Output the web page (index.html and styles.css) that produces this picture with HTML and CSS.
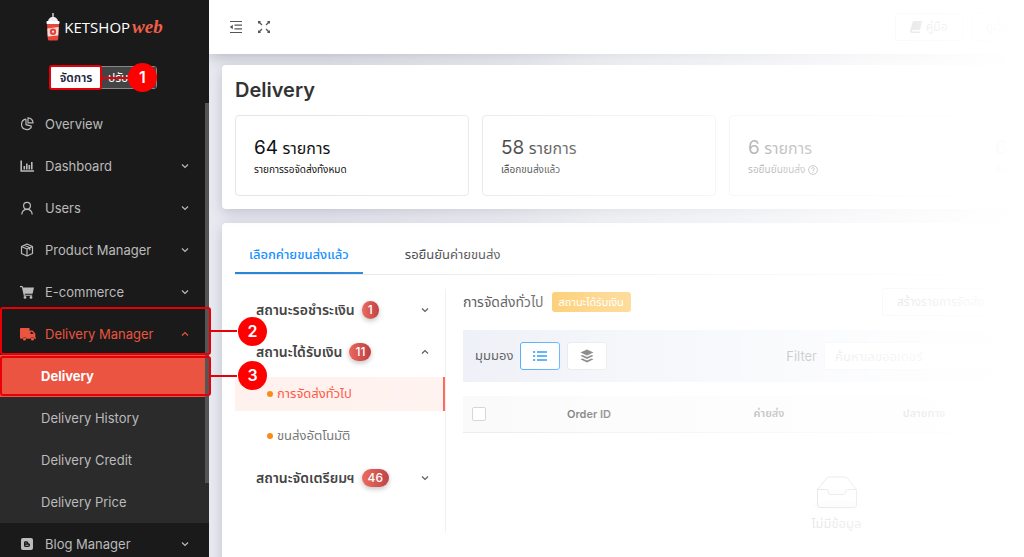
FILE: index.html
```html
<!DOCTYPE html>
<html lang="th">
<head>
    <meta charset="UTF-8">
    <meta name="viewport" content="width=device-width, initial-scale=1.0">
    <title>Delivery - KETSHOPweb</title>
    <link rel="stylesheet" href="styles.css">
</head>
<body>

    <!-- Shared chevrons -->
    <svg width="0" height="0" class="defs">
        <symbol id="down" viewBox="0 0 8 8"><path d="M1 2.5l3 3 3-3" fill="none" stroke="currentColor" stroke-width="1.2"/></symbol>
        <symbol id="up" viewBox="0 0 8 8"><path d="M1 5.5l3-3 3 3" fill="none" stroke="currentColor" stroke-width="1.2"/></symbol>
    </svg>

    <div class="app">
        <aside class="sidebar">
            <a href="#" class="logo">
                <svg width="14" height="28" viewBox="0 0 14 28">
                    <path d="M6.4 0h1.200v4h-1.200z" fill="#fff"/>
                    <path d="M2 9c0-3 2-5 5-5s5 2 5 5z" fill="#eee"/>
                    <rect x="0.500" y="8" width="13" height="3" rx="1" fill="#fff"/>
                    <path d="M1 11h12l-.8 15q-.1 1.500-1.600 1.500H3.400q-1.500 0-1.600-1.500z" fill="#e8453c"/>
                    <path d="M1.300 15.500l11.400-1.500-.5 8.500-10.500 1z" fill="#f7d9d5"/>
                    <circle cx="7" cy="18.800" r="3.200" fill="#e8453c"/>
                    <circle cx="7" cy="18.800" r="1" fill="#fff"/>
                </svg>
                <span class="logo-name">KETSHOP</span><span class="logo-web">web</span>
            </a>

            <div class="mode">
                <button type="button" class="mode-btn active">จัดการ</button>
                <button type="button" class="mode-btn">ปรับแต่ง</button>
                <span class="mark mark-mode"></span>
                <span class="num num-mode">1</span>
            </div>

            <nav class="menu">
                <ul>
                    <li><a href="#">
                        <svg class="icon" viewBox="0 0 14 14" fill="none" stroke="currentColor" stroke-width="1.200"><path d="M6 2.200a5.200 5.200 0 1 0 5.600 7M6 2.200v5.500l5.600 1.500"/><path d="M8 .8v5h5A5 5 0 0 0 8 .8z"/></svg>
                        Overview</a></li>
                    <li><a href="#">
                        <svg class="icon" viewBox="0 0 14 14" fill="none" stroke="currentColor" stroke-width="1.600"><path d="M1.200 1.500v10.500H14M4.300 10.500V7M6.800 10.500V4.500M9.300 10.500V6M11.800 10.500V3"/></svg>
                        Dashboard <svg class="arrow"><use href="#down"/></svg></a></li>
                    <li><a href="#">
                        <svg class="icon" viewBox="0 0 14 14" fill="none" stroke="currentColor" stroke-width="1.200"><circle cx="7" cy="4.800" r="3.400"/><path d="M1.800 13.500c.2-3 2.200-5.200 5.200-5.200s5 2.200 5.200 5.200"/></svg>
                        Users <svg class="arrow"><use href="#down"/></svg></a></li>
                    <li><a href="#">
                        <svg class="icon" viewBox="0 0 14 14" fill="none" stroke="currentColor" stroke-width="1.200" stroke-linejoin="round"><path d="M7 1l5.500 2.500v7L7 13l-5.500-2.500v-7zM1.500 3.500L7 6l5.500-2.500M7 6v7M4.200 2.300l5.600 2.500v2.500"/></svg>
                        Product Manager <svg class="arrow"><use href="#down"/></svg></a></li>
                    <li><a href="#">
                        <svg class="icon" viewBox="0 0 14 14" fill="currentColor"><path d="M0 1h2.600l.4 1.500h11l-1.400 6.200H4.700l.2 1h7.300v1.100H3.800L1.900 2.200H0z"/><circle cx="5" cy="12.400" r="1.400"/><circle cx="11" cy="12.400" r="1.400"/></svg>
                        E-commerce <svg class="arrow"><use href="#down"/></svg></a></li>
                    <li class="open"><a href="#">
                        <svg class="icon truck" viewBox="0 0 16 14" fill="currentColor"><path d="M1 1h8.500v2.500h3L15.300 6.500v4H16v1.300h-1.500a2.100 2.100 0 0 0-4.100 0H6.600a2.100 2.100 0 0 0-4.100 0H1A1 1 0 0 1 0 10.800V2a1 1 0 0 1 1-1zM10.500 4.800v2.200h3.300l-1.900-2.200z"/><circle cx="4.500" cy="12" r="1.600"/><circle cx="12.500" cy="12" r="1.600"/></svg>
                        Delivery Manager <svg class="arrow"><use href="#up"/></svg></a>
                        <span class="mark mark-parent"></span>
                        <span class="num num-parent">2</span>
                    </li>
                </ul>
                <ul class="submenu">
                    <li class="active"><a href="#">Delivery</a>
                        <span class="mark mark-child"></span>
                        <span class="num num-child">3</span>
                    </li>
                    <li><a href="#">Delivery History</a></li>
                    <li><a href="#">Delivery Credit</a></li>
                    <li><a href="#">Delivery Price</a></li>
                </ul>
                <ul>
                    <li><a href="#">
                        <svg class="icon" viewBox="0 0 14 14"><rect x="1" y="1" width="12" height="12" rx="2" fill="currentColor"/><path d="M5.200 4.200h1.600a1.500 1.500 0 0 1 1.500 1.500q0 .8.7.8a1 1 0 0 1 1 1v.8a1.700 1.700 0 0 1-1.700 1.700H5.500A1.500 1.500 0 0 1 4 8.500v-3a1.300 1.300 0 0 1 1.200-1.300z" fill="#1a1a1a"/><path d="M5.500 6h1M5.500 8.300h3" stroke="#bbb" stroke-width=".9"/></svg>
                        Blog Manager <svg class="arrow"><use href="#down"/></svg></a></li>
                </ul>
                <span class="scroll-thumb"></span>
            </nav>
        </aside>

        <div class="main">
            <div class="page">
                <header class="topbar">
                    <button type="button" class="icon-btn" aria-label="Collapse menu">
                        <svg width="14" height="14" viewBox="0 0 14 14"><path d="M1 1.500h12M5.500 5.200H13M5.500 8.800H13M1 12.500h12" stroke="currentColor" stroke-width="1.200"/><path d="M.8 7l3-2.200v4.400z" fill="currentColor"/></svg>
                    </button>
                    <button type="button" class="icon-btn" aria-label="Full screen">
                        <svg width="14" height="14" viewBox="0 0 14 14" fill="none" stroke="currentColor" stroke-width="1.200"><path d="M5 5L2 2M9 5l3-3M5 9l-3 3M9 9l3 3M1.600 3.600v-2h2M10.400 1.600h2v2M1.600 10.400v2h2M10.400 12.400h2v-2"/></svg>
                    </button>
                    <div class="top-actions">
                        <button type="button" class="btn">
                            <svg width="12" height="12" viewBox="0 0 12 12"><path d="M3 0h9l-2 9H2.500a1 1 0 0 0 0 1.500H10V12H2A2 2 0 0 1 .3 9z" fill="currentColor"/></svg>
                            คู่มือ</button>
                        <button type="button" class="btn">ดูเว็บ</button>
                    </div>
                </header>

                <main class="content">
                    <section class="card summary">
                        <h1>Delivery</h1>
                        <div class="stats">
                            <div class="stat">
                                <p class="count"><b>64</b> รายการ</p>
                                <p class="label">รายการรอจัดส่งทั้งหมด</p>
                            </div>
                            <div class="stat">
                                <p class="count"><b>58</b> รายการ</p>
                                <p class="label">เลือกขนส่งแล้ว</p>
                            </div>
                            <div class="stat">
                                <p class="count"><b>6</b> รายการ</p>
                                <p class="label">รอยืนยันขนส่ง
                                    <svg width="10" height="10" viewBox="0 0 10 10" fill="none" stroke="currentColor"><circle cx="5" cy="5" r="4.400"/><path d="M3.600 4c0-2 2.800-1.800 2.800-.2C6.400 4.800 5 4.800 5 6M5 6.900v1"/></svg>
                                </p>
                            </div>
                            <div class="stat">
                                <p class="count"><b>63</b></p>
                                <p class="label">ส่งแล้ว</p>
                            </div>
                        </div>
                    </section>

                    <section class="card orders">
                        <div class="tabs">
                            <a href="#" class="tab active">เลือกค่ายขนส่งแล้ว</a>
                            <a href="#" class="tab">รอยืนยันค่ายขนส่ง</a>
                        </div>

                        <div class="columns">
                            <ul class="status">
                                <li class="group"><a href="#">สถานะรอชำระเงิน <span class="badge">1</span><svg class="arrow"><use href="#down"/></svg></a></li>
                                <li class="group"><a href="#">สถานะได้รับเงิน <span class="badge">11</span><svg class="arrow"><use href="#up"/></svg></a></li>
                                <li class="child selected"><a href="#">การจัดส่งทั่วไป</a></li>
                                <li class="child"><a href="#">ขนส่งอัตโนมัติ</a></li>
                                <li class="group"><a href="#">สถานะจัดเตรียมฯ <span class="badge">46</span><svg class="arrow"><use href="#down"/></svg></a></li>
                            </ul>

                            <div class="list">
                                <div class="list-head">
                                    <h2>การจัดส่งทั่วไป</h2>
                                    <span class="tag">สถานะได้รับเงิน</span>
                                    <button type="button" class="btn create">สร้างรายการจัดส่ง</button>
                                </div>

                                <div class="toolbar">
                                    <span>มุมมอง</span>
                                    <button type="button" class="view active" aria-label="List view">
                                        <svg width="14" height="12" viewBox="0 0 14 12" stroke="currentColor" stroke-width="2"><path d="M0 2h2.200M4 2h10M0 6h2.200M4 6h10M0 10h2.200M4 10h10"/></svg>
                                    </button>
                                    <button type="button" class="view" aria-label="Group view">
                                        <svg width="14" height="14" viewBox="0 0 14 14" fill="currentColor"><path d="M7 .5l6.500 3L7 6.500.5 3.500z"/><path d="M.5 6.800l2-.9L7 8l4.500-2.100 2 .9L7 9.900z"/><path d="M.5 10.300l2-.9L7 11.500l4.500-2.100 2 .9L7 13.400z"/></svg>
                                    </button>
                                    <label for="filter">Filter</label>
                                    <input type="text" id="filter" placeholder="ค้นหาเลขออเดอร์">
                                </div>

                                <table>
                                    <thead>
                                        <tr>
                                            <th class="col-check"><input type="checkbox" aria-label="เลือกทั้งหมด"></th>
                                            <th class="col-order">Order ID</th>
                                            <th class="col-courier">ค่ายส่ง</th>
                                            <th class="col-dest">ปลายทาง</th>
                                            <th></th>
                                        </tr>
                                    </thead>
                                    <tbody>
                                        <tr>
                                            <td colspan="5" class="empty">
                                                <svg width="52" height="34" viewBox="0 0 52 34" fill="none" stroke="currentColor"><ellipse cx="26" cy="29" rx="25" ry="4.500" fill="#f5f5f5" stroke="none"/><path d="M6.500 13.500L15 3q1-2 3-2h16q2 0 3 2l8.500 10.500V29q0 2.500-2.500 2.500H9q-2.500 0-2.500-2.500z"/><path d="M6.500 13.500h9q2 0 2 2.500t2.500 2.500h12q2.500 0 2.500-2.500t2-2.500h9" fill="#fafafa"/></svg>
                                                <p>ไม่มีข้อมูล</p>
                                            </td>
                                        </tr>
                                    </tbody>
                                </table>
                            </div>
                        </div>
                    </section>
                </main>
            </div>
        </div>
    </div>

</body>
</html>
```
FILE: styles.css
```css
* {
    box-sizing: border-box;
}

body {
    margin: 0;
    font-family: Inter, "Noto Sans Thai", "Noto Sans", sans-serif;
    font-size: 13px;
    color: #333;
    background-color: #fff;
    overflow: hidden;
}

ul, p, h1, h2 {
    margin: 0;
    padding: 0;
    list-style: none;
}

a {
    color: inherit;
    text-decoration: none;
}

button, input {
    font-family: inherit;
}

.defs {
    position: absolute;
}

.app {
    display: flex;
    height: 100vh;
}

/* Sidebar */
.sidebar {
    position: relative;
    z-index: 2;
    flex: none;
    width: 209px;
    background-color: #1a1a1a;
    color: #bbb;
}

.logo {
    display: flex;
    align-items: center;
    justify-content: center;
    height: 54px;
    color: #fff;
}

.logo-name {
    margin-left: 4px;
    font-family: "Open Sans", sans-serif;
    font-size: 15px;
}

.logo-web {
    margin-left: 2px;
    font-family: "Liberation Serif", serif;
    font-size: 19px;
    font-style: italic;
    font-weight: bold;
    color: #ef5f48;
}

.mode {
    position: relative;
    display: flex;
    width: 107px;
    height: 23px;
    margin: 12px auto 14px 50px;
    border: 1px solid #888;
    border-radius: 3px;
}

.mode-btn {
    flex: 1;
    padding: 0;
    border: 0;
    font-size: 12px;
    white-space: nowrap;
    background-color: #444;
    color: #fff;
}

.mode-btn.active {
    flex: 0 0 50px;
    font-weight: 600;
    background-color: #fff;
    color: #1b2440;
}

.menu {
    position: relative;
}

.menu li {
    position: relative;
}

.menu a {
    display: flex;
    align-items: center;
    height: 42px;
    padding: 0 20px;
}

.icon {
    width: 14px;
    height: 14px;
    margin-right: 11px;
}

.truck {
    width: 16px;
    margin-right: 9px;
}

.arrow {
    width: 8px;
    height: 8px;
    margin-left: auto;
}

.open {
    color: #ea5440;
}

.submenu {
    background-color: #2b2b2b;
}

.submenu a {
    padding-left: 41px;
}

.submenu .active {
    background-color: #ea5440;
    color: #fff;
    font-weight: bold;
}

.scroll-thumb {
    position: absolute;
    top: 0;
    right: 0;
    width: 4px;
    height: 380px;
    background-color: #555;
}

/* Numbered guide marks */
.mark {
    position: absolute;
    z-index: 3;
    border: 2px solid #e80008;
    border-radius: 3px;
}

.mark::after {
    content: "";
    position: absolute;
    top: 50%;
    left: 100%;
    width: 28px;
    height: 2px;
    margin-top: -1px;
    background-color: #e80008;
}

.mark-mode {
    inset: -2px 54px -2px -2px;
}

.mark-parent {
    inset: -6px -2px 0 0;
}

.mark-child {
    inset: 1px -2px 1px 0;
}

.num {
    position: absolute;
    z-index: 4;
    width: 29px;
    height: 29px;
    border-radius: 50%;
    background-color: #f00;
    color: #fff;
    font-size: 16px;
    font-weight: 600;
    line-height: 29px;
    text-align: center;
}

.num-mode {
    top: -4px;
    right: -1px;
}

.num-parent {
    top: 4px;
    right: -58px;
}

.num-child {
    top: 6px;
    right: -58px;
}

/* Main area, fades out to the right */
.main {
    position: relative;
    flex: 1;
    min-width: 0;
    overflow: hidden;
    background-color: #e9eaf1;
}

.main::after {
    content: "";
    position: absolute;
    inset: 0;
    pointer-events: none;
    background: linear-gradient(to right, rgba(255, 255, 255, 0) 14%, rgba(255, 255, 255, 0.25) 37%, rgba(255, 255, 255, 0.48) 48%, rgba(255, 255, 255, 0.72) 69%, rgba(255, 255, 255, 0.88) 83%, rgba(255, 255, 255, 0.95) 92%, #fff 99%);
}

.page {
    min-width: 1027px;
}

.topbar {
    position: relative;
    display: flex;
    align-items: center;
    gap: 14px;
    height: 54px;
    padding: 0 20px;
    background-color: #fff;
    box-shadow: 0 2px 14px rgba(0, 20, 40, 0.25);
}

.icon-btn {
    display: flex;
    padding: 0;
    border: 0;
    background: none;
    color: #555;
}

.top-actions {
    display: flex;
    gap: 8px;
    width: 321px;
    margin-left: auto;
}

.btn {
    display: flex;
    align-items: center;
    gap: 4px;
    height: 28px;
    padding: 0 14px;
    border: 1px solid #ccc;
    border-radius: 3px;
    background-color: #fff;
    color: #333;
    font-size: 12px;
}

.content {
    padding: 11px 13px;
}

.card {
    padding: 13px;
    border-radius: 4px;
    background-color: #fff;
    box-shadow: 0 4px 14px rgba(0, 20, 60, 0.18);
}

.summary {
    position: relative;
    margin-bottom: 14px;
}

h1 {
    font-size: 20px;
    font-weight: 600;
    line-height: 24px;
    margin-bottom: 13px;
}

.stats {
    display: grid;
    grid-template-columns: repeat(4, 1fr);
    gap: 13px;
}

.stat {
    height: 81px;
    padding: 18px;
    border: 1px solid #e6e6e6;
    border-radius: 4px;
    color: #111;
}

.count {
    font-size: 16px;
    line-height: 28px;
}

.count b {
    font-size: 19px;
    font-weight: normal;
}

.label {
    font-size: 10px;
    line-height: 14px;
}

.label svg {
    vertical-align: middle;
}

.orders {
    min-height: 360px;
}

.tabs {
    display: flex;
    gap: 28px;
    border-bottom: 1px solid #e8e8e8;
}

.tab {
    padding: 0 14px;
    line-height: 36px;
}

.tab.active {
    border-bottom: 2px solid #2b86d9;
    color: #1890ff;
    font-weight: 500;
}

.columns {
    display: flex;
    padding-top: 14px;
}

.status {
    flex: none;
    width: 211px;
    border-right: 1px solid #eee;
}

.status a {
    display: flex;
    align-items: center;
    height: 42px;
    padding: 0 16px 0 21px;
    white-space: nowrap;
}

.group {
    color: #444;
    font-size: 14px;
    font-weight: 600;
}

.badge {
    margin-left: 7px;
    padding: 0 6px;
    border-radius: 9px;
    background: linear-gradient(to right, #ea6355, #b93436);
    box-shadow: 0 2px 5px rgba(0, 0, 0, 0.25);
    color: #fff;
    font-size: 12px;
    font-weight: 500;
    line-height: 18px;
}

.child {
    padding: 4px 0;
    color: #777;
}

.child a {
    height: 34px;
    padding-left: 32px;
}

.child a::before {
    content: "";
    width: 6px;
    height: 6px;
    margin-right: 4px;
    border-radius: 50%;
    background-color: #fa8c16;
}

.child.selected a {
    border-right: 2px solid #ff4d3d;
    background-color: #fff1ee;
    color: #ff5a45;
}

.list {
    flex: 1;
    padding: 0 0 0 17px;
}

.list-head {
    display: flex;
    align-items: center;
    gap: 8px;
    height: 26px;
    margin-bottom: 15px;
}

h2 {
    font-size: 14px;
    font-weight: normal;
}

.tag {
    padding: 0 7px;
    border-radius: 3px;
    background-color: #fbb732;
    color: #fff;
    font-size: 11px;
    line-height: 20px;
}

.create {
    width: 328px;
    margin-left: auto;
}

.toolbar {
    display: flex;
    align-items: center;
    gap: 7px;
    height: 52px;
    padding: 0 12px;
    background-color: #ebeef6;
}

.view {
    display: flex;
    align-items: center;
    justify-content: center;
    width: 40px;
    height: 28px;
    padding: 0;
    border: 1px solid #ddd;
    border-radius: 3px;
    background-color: #fff;
    color: #333;
}

.view.active {
    border-color: #1890ff;
    color: #1890ff;
}

.toolbar label {
    margin-left: auto;
}

#filter {
    width: 374px;
    height: 28px;
    padding: 0 10px;
    border: 1px solid #e0e0e0;
    border-radius: 3px;
    font-size: 13px;
}

#filter::placeholder {
    color: #aaa;
}

table {
    width: 100%;
    margin-top: 14px;
    border-collapse: collapse;
    table-layout: fixed;
}

th {
    height: 36px;
    padding: 0;
    border-bottom: 1px solid #e8e8e8;
    background-color: #f9f9f9;
    font-size: 11px;
    font-weight: 600;
}

.col-check {
    width: 32px;
}

.col-order {
    width: 188px;
}

.col-courier {
    width: 172px;
}

.col-dest {
    width: 138px;
}

th input {
    appearance: none;
    display: block;
    width: 14px;
    height: 14px;
    margin: 0 auto;
    border: 1px solid #ccc;
    border-radius: 2px;
    background-color: #fff;
}

.empty {
    padding: 43px 0 0;
    color: #999;
    text-align: center;
}

.empty p {
    line-height: 20px;
}
```
